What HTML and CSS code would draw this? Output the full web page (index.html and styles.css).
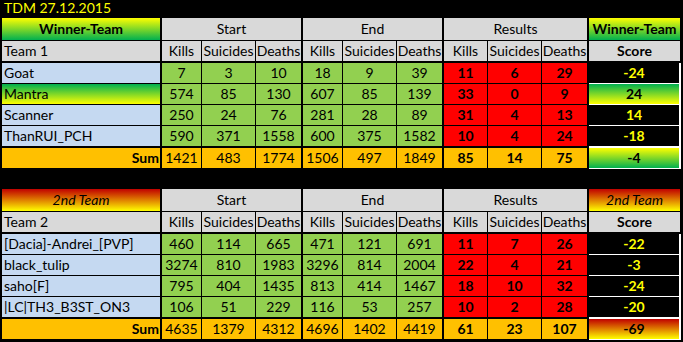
FILE: index.html
```html
<!DOCTYPE html>
<html>
<head>
<meta charset="utf-8">
<link rel="stylesheet" href="styles.css">
</head>
<body>
<div class="title">TDM 27.12.2015</div>

<div class="sheet">
  <div class="c hd b tr win-head">Winner-Team</div>
  <div class="c hd span3 tr">Start</div>
  <div class="c hd span3 tr">End</div>
  <div class="c hd span3 tr">Results</div>
  <div class="c hd b sc-head win-head">Winner-Team</div>

  <div class="c hd l tr tb">Team 1</div>
  <div class="c hd tb">Kills</div><div class="c hd tb">Suicides</div><div class="c hd tr tb">Deaths</div>
  <div class="c hd tb">Kills</div><div class="c hd tb">Suicides</div><div class="c hd tr tb">Deaths</div>
  <div class="c hd tb">Kills</div><div class="c hd tb">Suicides</div><div class="c hd tr tb">Deaths</div>
  <div class="c hd b sc-head tb">Score</div>

  <div class="c nm l tr">Goat</div>
  <div class="c g">7</div><div class="c g">3</div><div class="c g tr">10</div>
  <div class="c g">18</div><div class="c g">9</div><div class="c g tr">39</div>
  <div class="c r b">11</div><div class="c r b">6</div><div class="c r b tr">29</div>
  <div class="c sc">-24</div>

  <div class="c nm l tr grad-gy">Mantra</div>
  <div class="c g">574</div><div class="c g">85</div><div class="c g tr">130</div>
  <div class="c g">607</div><div class="c g">85</div><div class="c g tr">139</div>
  <div class="c r b">33</div><div class="c r b">0</div><div class="c r b tr">9</div>
  <div class="c sc grad-gy dark">24</div>

  <div class="c nm l tr">Scanner</div>
  <div class="c g">250</div><div class="c g">24</div><div class="c g tr">76</div>
  <div class="c g">281</div><div class="c g">28</div><div class="c g tr">89</div>
  <div class="c r b">31</div><div class="c r b">4</div><div class="c r b tr">13</div>
  <div class="c sc">14</div>

  <div class="c nm l tr tb">ThanRUI_PCH</div>
  <div class="c g tb">590</div><div class="c g tb">371</div><div class="c g tr tb">1558</div>
  <div class="c g tb">600</div><div class="c g tb">375</div><div class="c g tr tb">1582</div>
  <div class="c r b tb">10</div><div class="c r b tb">4</div><div class="c r b tr tb">24</div>
  <div class="c sc tbw">-18</div>

  <div class="c s b rt tr">Sum</div>
  <div class="c s">1421</div><div class="c s">483</div><div class="c s tr">1774</div>
  <div class="c s">1506</div><div class="c s">497</div><div class="c s tr">1849</div>
  <div class="c s b">85</div><div class="c s b">14</div><div class="c s b tr">75</div>
  <div class="c sc grad-yg dark">-4</div>
</div>

<div class="sheet second">
  <div class="c hd i tr red-head">2nd Team</div>
  <div class="c hd span3 tr">Start</div>
  <div class="c hd span3 tr">End</div>
  <div class="c hd span3 tr">Results</div>
  <div class="c hd i sc-head red-head">2nd Team</div>

  <div class="c hd l tr tb">Team 2</div>
  <div class="c hd tb">Kills</div><div class="c hd tb">Suicides</div><div class="c hd tr tb">Deaths</div>
  <div class="c hd tb">Kills</div><div class="c hd tb">Suicides</div><div class="c hd tr tb">Deaths</div>
  <div class="c hd tb">Kills</div><div class="c hd tb">Suicides</div><div class="c hd tr tb">Deaths</div>
  <div class="c hd b sc-head tb">Score</div>

  <div class="c nm l tr">[Dacia]-Andrei_[PVP]</div>
  <div class="c g">460</div><div class="c g">114</div><div class="c g tr">665</div>
  <div class="c g">471</div><div class="c g">121</div><div class="c g tr">691</div>
  <div class="c r b">11</div><div class="c r b">7</div><div class="c r b tr">26</div>
  <div class="c sc">-22</div>

  <div class="c nm l tr">black_tulip</div>
  <div class="c g">3274</div><div class="c g">810</div><div class="c g tr">1983</div>
  <div class="c g">3296</div><div class="c g">814</div><div class="c g tr">2004</div>
  <div class="c r b">22</div><div class="c r b">4</div><div class="c r b tr">21</div>
  <div class="c sc">-3</div>

  <div class="c nm l tr">saho[F]</div>
  <div class="c g">795</div><div class="c g">404</div><div class="c g tr">1435</div>
  <div class="c g">813</div><div class="c g">414</div><div class="c g tr">1467</div>
  <div class="c r b">18</div><div class="c r b">10</div><div class="c r b tr">32</div>
  <div class="c sc">-24</div>

  <div class="c nm l tr tb">|LC|TH3_B3ST_ON3</div>
  <div class="c g tb">106</div><div class="c g tb">51</div><div class="c g tr tb">229</div>
  <div class="c g tb">116</div><div class="c g tb">53</div><div class="c g tr tb">257</div>
  <div class="c r b tb">10</div><div class="c r b tb">2</div><div class="c r b tr tb">28</div>
  <div class="c sc tbw">-20</div>

  <div class="c s b rt tr">Sum</div>
  <div class="c s">4635</div><div class="c s">1379</div><div class="c s tr">4312</div>
  <div class="c s">4696</div><div class="c s">1402</div><div class="c s tr">4419</div>
  <div class="c s b">61</div><div class="c s b">23</div><div class="c s b tr">107</div>
  <div class="c sc grad-ry dark">-69</div>
</div>
</body>
</html>
```

FILE: styles.css
```css
html, body {
  margin: 0;
  padding: 0;
  background: #000;
}
body {
  width: 683px;
  height: 342px;
  overflow: hidden;
  font-family: Lato, "Open Sans", sans-serif;
  font-size: 14px;
  color: #000;
}
.title {
  height: 18px;
  padding-left: 4px;
  color: #ffff00;
  font-size: 14px;
  line-height: 16px;
}
.sheet {
  margin-left: 2px;
  display: grid;
  grid-template-columns: 160px 40px 54px 47px 40px 54px 47px 44px 54px 47px 92px;
  grid-template-rows: 23px 22px 21px 21px 21px 22px 21px;
  width: 679px;
}
.sheet.second {
  margin-top: 20px;
}
.c {
  box-sizing: border-box;
  border-right: 1px solid #000;
  border-bottom: 1px solid #000;
  display: flex;
  align-items: center;
  justify-content: center;
  line-height: 14px;
  white-space: nowrap;
  overflow: hidden;
}
.tr { border-right-width: 2px; }
.tb { border-bottom-width: 2px; }
.span3 { grid-column: span 3; }
.l { justify-content: flex-start; padding-left: 2px; }
.rt { justify-content: flex-end; padding-right: 1px; }
.b { font-weight: bold; }
.i { font-style: italic; }
.hd { background: #d9d9d9; }
.nm { background: #c5d9f1; }
.g { background: #92d050; }
.r { background: #ff0000; }
.s { background: #ffc000; }
.sc-head { border-right: 1px solid #000; }
.sc {
  background: #000;
  color: #ffff00;
  font-weight: bold;
  border-right: 2px solid #fff;
  border-bottom: 1px solid #fff;
}
.sc.tbw { border-bottom: 2px solid #fff; }
.sc.dark { color: #000; }
.win-head { background: linear-gradient(to bottom, #ffff00, #00b050); }
.red-head { background: linear-gradient(to bottom, #c00000, #ffff00); }
.grad-gy { background: linear-gradient(to bottom, #00b050, #ffff00); }
.grad-yg { background: linear-gradient(to bottom, #ffff00, #00b050); }
.grad-ry { background: linear-gradient(to bottom, #c00000, #ffff00); }
```
